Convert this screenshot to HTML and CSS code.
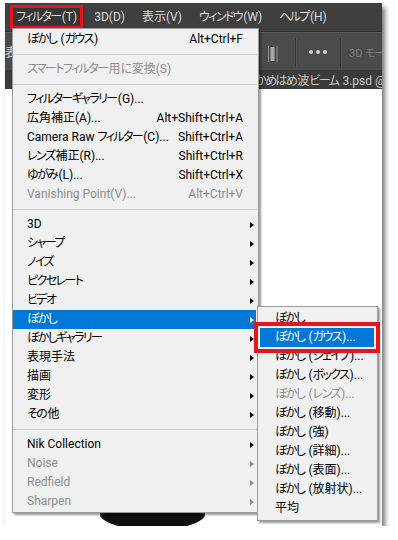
FILE: index.html
```html
<!DOCTYPE html>
<html lang="ja">
<head>
<meta charset="utf-8">
<title>Photoshop フィルターメニュー</title>
<link rel="stylesheet" href="styles.css">
</head>
<body>
<div class="shot">
  <div class="menubar">
    <span class="mb-item mb-active"><span class="k">フィルター</span>(T)</span>
    <span class="mb-item">3D(D)</span>
    <span class="mb-item">表示(V)</span>
    <span class="mb-item"><span class="k">ウィンドウ</span>(W)</span>
    <span class="mb-item"><span class="k">ヘルプ</span>(H)</span>
  </div>
  <div class="optbar">
    <span class="opt-lead">表示</span>
    <svg class="opt-icon" width="10" height="16" viewBox="0 0 10 16">
      <rect x="0" y="0" width="1" height="16" fill="#8e8e8e"/>
      <rect x="2.5" y="1" width="4" height="14" fill="#a8a8a8"/>
      <rect x="8.5" y="0" width="1" height="16" fill="#8e8e8e"/>
    </svg>
    <span class="opt-sep"></span>
    <span class="opt-dots"><i></i><i></i><i></i></span>
    <span class="opt-sep"></span>
    <span class="opt-3d">3D <span class="k">モード</span>：</span>
  </div>
  <div class="tabbar"><span class="tab"><span class="k">かめはめ</span>波<span class="k">ビーム</span> 3.psd @ 66.7% (RGB/8)</span></div>
  <div class="canvas"><div class="blob"></div></div>

  <div class="menu main">
    <div class="mi"><span class="lb"><span class="k">ぼかし</span> (<span class="k">ガウス</span>)</span><span class="sc">Alt+Ctrl+F</span></div>
    <div class="sep"></div>
    <div class="mi off"><span class="lb"><span class="k">スマートフィルター</span>用<span class="k">に</span>変換(S)</span></div>
    <div class="sep"></div>
    <div class="mi"><span class="lb"><span class="k">フィルターギャラリー</span>(G)...</span></div>
    <div class="mi"><span class="lb">広角補正(A)...</span><span class="sc">Alt+Shift+Ctrl+A</span></div>
    <div class="mi"><span class="lb">Camera Raw <span class="k">フィルター</span>(C)...</span><span class="sc">Shift+Ctrl+A</span></div>
    <div class="mi"><span class="lb"><span class="k">レンズ</span>補正(R)...</span><span class="sc">Shift+Ctrl+R</span></div>
    <div class="mi"><span class="lb"><span class="k">ゆがみ</span>(L)...</span><span class="sc">Shift+Ctrl+X</span></div>
    <div class="mi off"><span class="lb">Vanishing Point(V)...</span><span class="sc">Alt+Ctrl+V</span></div>
    <div class="sep"></div>
    <div class="mi"><span class="lb">3D</span><span class="arr"></span></div>
    <div class="mi"><span class="lb"><span class="k">シャープ</span></span><span class="arr"></span></div>
    <div class="mi"><span class="lb"><span class="k">ノイズ</span></span><span class="arr"></span></div>
    <div class="mi"><span class="lb"><span class="k">ピクセレート</span></span><span class="arr"></span></div>
    <div class="mi"><span class="lb"><span class="k">ビデオ</span></span><span class="arr"></span></div>
    <div class="mi hl"><span class="lb"><span class="k">ぼかし</span></span><span class="arr"></span></div>
    <div class="mi"><span class="lb"><span class="k">ぼかしギャラリー</span></span><span class="arr"></span></div>
    <div class="mi"><span class="lb">表現手法</span><span class="arr"></span></div>
    <div class="mi"><span class="lb">描画</span><span class="arr"></span></div>
    <div class="mi"><span class="lb">変形</span><span class="arr"></span></div>
    <div class="mi"><span class="lb"><span class="k">その</span>他</span><span class="arr"></span></div>
    <div class="sep"></div>
    <div class="mi"><span class="lb">Nik Collection</span><span class="arr"></span></div>
    <div class="mi off"><span class="lb">Noise</span><span class="arr"></span></div>
    <div class="mi off"><span class="lb">Redfield</span><span class="arr"></span></div>
    <div class="mi off"><span class="lb">Sharpen</span><span class="arr"></span></div>
  </div>

  <div class="menu sub">
    <div class="mi"><span class="lb"><span class="k">ぼかし</span></span></div>
    <div class="mi hl marked"><span class="lb"><span class="k">ぼかし</span> (<span class="k">ガウス</span>)...</span></div>
    <div class="mi"><span class="lb"><span class="k">ぼかし</span> (<span class="k">シェイプ</span>)...</span></div>
    <div class="mi"><span class="lb"><span class="k">ぼかし</span> (<span class="k">ボックス</span>)...</span></div>
    <div class="mi off"><span class="lb"><span class="k">ぼかし</span> (<span class="k">レンズ</span>)...</span></div>
    <div class="mi"><span class="lb"><span class="k">ぼかし</span> (移動)...</span></div>
    <div class="mi"><span class="lb"><span class="k">ぼかし</span> (強)</span></div>
    <div class="mi"><span class="lb"><span class="k">ぼかし</span> (詳細)...</span></div>
    <div class="mi"><span class="lb"><span class="k">ぼかし</span> (表面)...</span></div>
    <div class="mi"><span class="lb"><span class="k">ぼかし</span> (放射状)...</span></div>
    <div class="mi"><span class="lb">平均</span></div>
  </div>
</div>
</body>
</html>
```

FILE: styles.css
```css
html, body {
  margin: 0;
  padding: 0;
  background: #ffffff;
}

body {
  font-family: Roboto, "Noto Sans CJK JP", sans-serif;
  font-feature-settings: "palt" 1;
}

/* kana runs: Windows UI fonts set kana narrower than kanji */
.k {
  letter-spacing: -1.6px;
  margin-right: 1.2px;
}

.shot {
  position: relative;
  margin: 3px 0 0 5px;
  width: 377px;
  height: 523px;
  overflow: hidden;
  display: flex;
  flex-direction: column;
  box-shadow: 3px 4px 5px rgba(0, 0, 0, 0.55);
  background: #ffffff;
}

/* ---------- application chrome ---------- */
.menubar {
  flex: 0 0 28px;
  display: flex;
  align-items: center;
  gap: 17px;
  padding-left: 11px;
  background: #3f3f3f;
  border-bottom: 1px solid #2e2e2e;
  color: #dcdcdc;
  font-size: 12px;
  white-space: nowrap;
}

.mb-item {
  line-height: 18px;
}

.mb-active {
  outline: 3px solid #e3161e;
  outline-offset: 0;
  padding: 0 3px;
  margin: 0 -3px;
  background: #363636;
}

.optbar {
  flex: 0 0 38px;
  display: flex;
  align-items: center;
  background: #4b4b4b;
  border-top: 1px solid #5a5a5a;
  box-sizing: border-box;
  color: #d6d6d6;
  font-size: 12px;
  white-space: nowrap;
}

.opt-lead {
  flex: 0 0 263px;
}

.opt-icon {
  flex: 0 0 auto;
  display: block;
  margin-top: 4px;
}

.opt-sep {
  flex: 0 0 1px;
  align-self: stretch;
  margin: 5px 0 3px 0;
  background: #363636;
  box-shadow: 1px 0 0 #555;
}

.opt-icon + .opt-sep {
  margin-left: 17px;
}

.opt-dots {
  display: flex;
  gap: 3px;
  margin: 0 13px;
}

.opt-dots i {
  width: 4px;
  height: 4px;
  border-radius: 50%;
  background: #d2d2d2;
}

.opt-3d {
  margin-left: 8px;
  color: #7e7e7e;
  font-size: 11px;
}

.tabbar {
  flex: 0 0 19px;
  display: flex;
  align-items: center;
  background: #3b3b3b;
  color: #c9c9c9;
  font-size: 12px;
  white-space: nowrap;
}

.tab {
  padding-left: 250px;
}

.canvas {
  flex: 1 1 auto;
  position: relative;
  background: #ffffff;
}

.blob {
  position: absolute;
  left: 95px;
  top: 409px;
  width: 105px;
  height: 32px;
  border-radius: 50%;
  background: #111111;
  box-shadow: inset 0 6px 0 #2a2a2a;
}

/* ---------- dropdown menus ---------- */
.menu {
  position: absolute;
  box-sizing: border-box;
  background: #f0f0f0;
  border: 1px solid #9a9a9a;
  box-shadow: 2px 2px 2px rgba(0, 0, 0, 0.4);
  color: #000000;
  font-size: 12px;
  line-height: 19px;
  white-space: nowrap;
}

.main {
  left: 7px;
  top: 25px;
  width: 247px;
  padding: 1px 0;
}

.sub {
  left: 252px;
  top: 303px;
  width: 121px;
  padding: 2px 0;
}

.mi {
  display: grid;
  grid-template-columns: 1fr auto 13px;
  align-items: center;
  height: 19px;
  margin: 0 2px 0 0;
  padding-left: 14px;
}

.sub .mi {
  margin: 0 3px 0 2px;
  padding-left: 15px;
}

.lb {
  grid-column: 1;
}

.sc {
  grid-column: 2;
}

.arr {
  grid-column: 3;
  justify-self: start;
  margin-left: 7px;
  width: 0;
  height: 0;
  border-left: 4px solid currentColor;
  border-top: 3.5px solid transparent;
  border-bottom: 3.5px solid transparent;
}

.off {
  color: #8d8d8d;
}

.hl {
  background: #0078d7;
  color: #ffffff;
}

.marked {
  outline: 4px solid #e3161e;
  outline-offset: 2px;
}

.sep {
  margin: 5px 1px 5px 0;
  border-top: 1px solid #cacaca;
}
```
